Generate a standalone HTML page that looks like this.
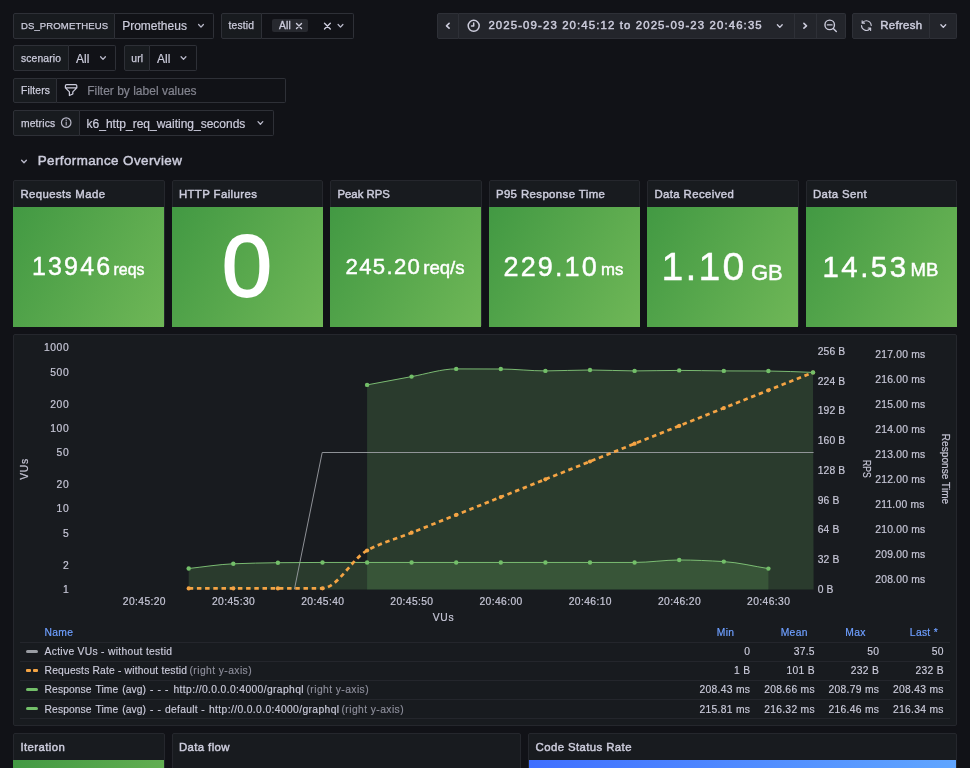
<!DOCTYPE html>
<html lang="en"><head><meta charset="utf-8"><title>k6 Prometheus Dashboard</title>
<style>
html,body{margin:0;padding:0}
body{width:970px;height:768px;overflow:hidden;background:#111217;font-family:"Liberation Sans",sans-serif;color:#ccccdc;position:relative;will-change:transform}
.b{position:absolute;box-sizing:border-box;border:1px solid #2e3037}
.lbl{background:#181b1f;border-radius:2px 0 0 2px}
.val{background:#111217;border-radius:0 2px 2px 0;border-left:none}
.t{position:absolute;white-space:nowrap;line-height:1;transform:translateY(-50%)}
.l{margin-top:.6px;font-size:10.3px;letter-spacing:.15px;-webkit-text-stroke:.25px #ccccdc}
.v{margin-top:.6px;font-size:12px;letter-spacing:0;-webkit-text-stroke:.2px #ccccdc}
.pt{margin-top:.6px;font-size:11.4px;letter-spacing:.4px;-webkit-text-stroke:.45px #ccccdc}
.ax{font-size:10.3px;letter-spacing:.62px;color:#c6c6d6;margin-top:1.2px;-webkit-text-stroke:.2px #c6c6d6}
.lg{font-size:10.3px;letter-spacing:.3px;-webkit-text-stroke:.15px #ccccdc}
.r{text-align:right}
.panel{position:absolute;box-sizing:border-box;border:1px solid #25272d;background:#181b1f;border-radius:2px}
.stat{position:absolute;background:linear-gradient(120deg,rgb(66,153,67),rgb(111,183,87))}
.sv2{position:absolute;white-space:nowrap;line-height:1;color:#fff;-webkit-text-stroke:.45px #fff}
.sv2 span{line-height:1;white-space:nowrap}
.btn{position:absolute;box-sizing:border-box;background:#23252b;border:1px solid #2e3037}
svg{position:absolute;left:0;top:0}
</style></head>
<body>
<div class="b lbl" style="left:13px;top:12.8px;width:102.3px;height:25.8px;"></div>
<div class="t l" style="left:21px;top:25.8px;font-size:9.55px;letter-spacing:.1px">DS_PROMETHEUS</div>
<div class="b val" style="left:115.3px;top:12.8px;width:98.9px;height:25.8px;"></div>
<div class="t v" style="left:122.2px;top:25.8px;">Prometheus</div>
<div class="b lbl" style="left:221.4px;top:12.8px;width:40.8px;height:25.8px;"></div>
<div class="t l" style="left:228.6px;top:25.8px;">testid</div>
<div class="b val" style="left:262.2px;top:12.8px;width:91.8px;height:25.8px;"></div>
<div style="position:absolute;left:272.3px;top:18.5px;width:35.7px;height:13.8px;background:#27292f;border-radius:2px"></div>
<div class="t l" style="left:279px;top:25.6px;-webkit-text-stroke:.3px #ccccdc">All</div>
<div class="b lbl" style="left:13px;top:45.2px;width:56.3px;height:25.6px;"></div>
<div class="t l" style="left:21px;top:58.1px;">scenario</div>
<div class="b val" style="left:69.3px;top:45.2px;width:47.0px;height:25.6px;"></div>
<div class="t v" style="left:76px;top:58.1px;">All</div>
<div class="b lbl" style="left:124px;top:45.2px;width:26.4px;height:25.6px;"></div>
<div class="t l" style="left:131.3px;top:58.1px;">url</div>
<div class="b val" style="left:150.4px;top:45.2px;width:46.7px;height:25.6px;"></div>
<div class="t v" style="left:157px;top:58.1px;">All</div>
<div class="b lbl" style="left:13px;top:77.6px;width:43.6px;height:25.7px;"></div>
<div class="t l" style="left:21px;top:90.55px;">Filters</div>
<div class="b val" style="left:56.6px;top:77.6px;width:229.4px;height:25.7px;"></div>
<div class="t v" style="left:87.2px;top:90.55px;color:#83848f;-webkit-text-stroke:.2px #83848f">Filter by label values</div>
<div class="b lbl" style="left:13px;top:110px;width:66.5px;height:25.7px;"></div>
<div class="t l" style="left:21px;top:122.95px;">metrics</div>
<div class="b val" style="left:79.5px;top:110px;width:194.2px;height:25.7px;"></div>
<div class="t v" style="left:86.6px;top:122.95px;">k6_http_req_waiting_seconds</div>
<div class="btn" style="left:436.8px;top:12.8px;width:22.6px;height:25.8px;border-radius:2px 0 0 2px"></div>
<div class="btn" style="left:459.4px;top:12.8px;width:335.9px;height:25.8px;border-left:none"></div>
<div class="btn" style="left:795.3px;top:12.8px;width:21.9px;height:25.8px;border-left:none"></div>
<div class="btn" style="left:817.2px;top:12.8px;width:28.4px;height:25.8px;border-left:none;border-radius:0 2px 2px 0"></div>
<div class="btn" style="left:852px;top:12.8px;width:78.4px;height:25.8px;border-radius:2px 0 0 2px"></div>
<div class="btn" style="left:930.4px;top:12.8px;width:26.6px;height:25.8px;border-left:none;border-radius:0 2px 2px 0"></div>
<div class="t pt" style="left:488.4px;top:25.8px;letter-spacing:1.12px">2025-09-23 20:45:12 to 2025-09-23 20:46:35</div>
<div class="t pt" style="left:880.3px;top:25.8px;letter-spacing:.3px">Refresh</div>
<div class="t " style="left:37.7px;top:161.4px;font-size:13.4px;letter-spacing:.42px;-webkit-text-stroke:.45px #ccccdc">Performance Overview</div>
<div class="panel" style="left:13px;top:180.4px;width:151.5px;height:146.4px"></div>
<div class="stat" style="left:13.4px;top:206.6px;width:150.7px;height:120px"></div>
<div class="t pt" style="left:20.4px;top:194.8px;">Requests Made</div>
<div class="panel" style="left:171.5px;top:180.4px;width:151.5px;height:146.4px"></div>
<div class="stat" style="left:171.9px;top:206.6px;width:150.7px;height:120px"></div>
<div class="t pt" style="left:178.9px;top:194.8px;">HTTP Failures</div>
<div class="panel" style="left:330px;top:180.4px;width:151.5px;height:146.4px"></div>
<div class="stat" style="left:330.4px;top:206.6px;width:150.7px;height:120px"></div>
<div class="t pt" style="left:337.4px;top:194.8px;letter-spacing:0">Peak RPS</div>
<div class="panel" style="left:488.5px;top:180.4px;width:151.5px;height:146.4px"></div>
<div class="stat" style="left:488.9px;top:206.6px;width:150.7px;height:120px"></div>
<div class="t pt" style="left:495.9px;top:194.8px;">P95 Response Time</div>
<div class="panel" style="left:647px;top:180.4px;width:151.5px;height:146.4px"></div>
<div class="stat" style="left:647.4px;top:206.6px;width:150.7px;height:120px"></div>
<div class="t pt" style="left:654.4px;top:194.8px;">Data Received</div>
<div class="panel" style="left:805.5px;top:180.4px;width:151.5px;height:146.4px"></div>
<div class="stat" style="left:805.9px;top:206.6px;width:150.7px;height:120px"></div>
<div class="t pt" style="left:812.9px;top:194.8px;">Data Sent</div>
<div class="sv2" style="left:31.9px;top:253.84px;font-size:25.0px;letter-spacing:2.2px;">13946<span style="position:absolute;left:81.7px;top:7.7px;font-size:15.9px;letter-spacing:0"> reqs</span></div>
<div class="sv2" style="left:345.6px;top:255.51px;font-size:22.2px;letter-spacing:1.3px;">245.20<span style="position:absolute;left:77.6px;top:3.05px;font-size:18.6px;letter-spacing:0"> req/s</span></div>
<div class="sv2" style="left:503.6px;top:253.74px;font-size:27.0px;letter-spacing:2.1px;">229.10<span style="position:absolute;left:97.4px;top:8.64px;font-size:16.8px;letter-spacing:0"> ms</span></div>
<div class="sv2" style="left:661.5px;top:247.12px;font-size:39.2px;letter-spacing:2.2px;">1.10<span style="position:absolute;left:89.5px;top:14.56px;font-size:22.0px;letter-spacing:0"> GB</span></div>
<div class="sv2" style="left:822.5px;top:252.21px;font-size:29.4px;letter-spacing:2.5px;">14.53<span style="position:absolute;left:88.1px;top:9.15px;font-size:18.6px;letter-spacing:0"> MB</span></div>
<div class="sv2" style="left:221.6px;top:221.51px;font-size:88px;letter-spacing:0px;-webkit-text-stroke:1.9px #fff;transform:scaleX(1.02);transform-origin:0 0">0</div>
<div class="panel" style="left:13px;top:334px;width:944px;height:392.4px"></div>
<div class="t ax" style="right:900.7px;top:343px;margin-top:0;transform:none;">1000</div>
<div class="t ax" style="right:900.7px;top:368px;margin-top:0;transform:none;">500</div>
<div class="t ax" style="right:900.7px;top:400px;margin-top:0;transform:none;">200</div>
<div class="t ax" style="right:900.7px;top:424px;margin-top:0;transform:none;">100</div>
<div class="t ax" style="right:900.7px;top:448px;margin-top:0;transform:none;">50</div>
<div class="t ax" style="right:900.7px;top:480px;margin-top:0;transform:none;">20</div>
<div class="t ax" style="right:900.7px;top:504px;margin-top:0;transform:none;">10</div>
<div class="t ax" style="right:900.7px;top:529px;margin-top:0;transform:none;">5</div>
<div class="t ax" style="right:900.7px;top:561px;margin-top:0;transform:none;">2</div>
<div class="t ax" style="right:900.7px;top:585px;margin-top:0;transform:none;">1</div>
<div class="t ax" style="left:144.4px;top:597px;margin-top:0;transform:translateX(-50%);letter-spacing:.39px">20:45:20</div>
<div class="t ax" style="left:233.6px;top:597px;margin-top:0;transform:translateX(-50%);letter-spacing:.39px">20:45:30</div>
<div class="t ax" style="left:322.8px;top:597px;margin-top:0;transform:translateX(-50%);letter-spacing:.39px">20:45:40</div>
<div class="t ax" style="left:411.9px;top:597px;margin-top:0;transform:translateX(-50%);letter-spacing:.39px">20:45:50</div>
<div class="t ax" style="left:501.1px;top:597px;margin-top:0;transform:translateX(-50%);letter-spacing:.39px">20:46:00</div>
<div class="t ax" style="left:590.3px;top:597px;margin-top:0;transform:translateX(-50%);letter-spacing:.39px">20:46:10</div>
<div class="t ax" style="left:679.5px;top:597px;margin-top:0;transform:translateX(-50%);letter-spacing:.39px">20:46:20</div>
<div class="t ax" style="left:768.7px;top:597px;margin-top:0;transform:translateX(-50%);letter-spacing:.39px">20:46:30</div>
<div class="t ax" style="left:443.5px;top:613px;margin-top:0;transform:translateX(-50%);">VUs</div>
<div class="t ax" style="left:817.8px;top:347px;margin-top:0;transform:none;letter-spacing:.1px">256 B</div>
<div class="t ax" style="left:817.8px;top:377px;margin-top:0;transform:none;letter-spacing:.1px">224 B</div>
<div class="t ax" style="left:817.8px;top:406px;margin-top:0;transform:none;letter-spacing:.1px">192 B</div>
<div class="t ax" style="left:817.8px;top:436px;margin-top:0;transform:none;letter-spacing:.1px">160 B</div>
<div class="t ax" style="left:817.8px;top:466px;margin-top:0;transform:none;letter-spacing:.1px">128 B</div>
<div class="t ax" style="left:817.8px;top:496px;margin-top:0;transform:none;letter-spacing:.1px">96 B</div>
<div class="t ax" style="left:817.8px;top:525px;margin-top:0;transform:none;letter-spacing:.1px">64 B</div>
<div class="t ax" style="left:817.8px;top:555px;margin-top:0;transform:none;letter-spacing:.1px">32 B</div>
<div class="t ax" style="left:817.8px;top:585px;margin-top:0;transform:none;letter-spacing:.1px">0 B</div>
<div class="t ax" style="left:875.2px;top:350px;margin-top:0;transform:none;letter-spacing:.25px">217.00 ms</div>
<div class="t ax" style="left:875.2px;top:375px;margin-top:0;transform:none;letter-spacing:.25px">216.00 ms</div>
<div class="t ax" style="left:875.2px;top:400px;margin-top:0;transform:none;letter-spacing:.25px">215.00 ms</div>
<div class="t ax" style="left:875.2px;top:425px;margin-top:0;transform:none;letter-spacing:.25px">214.00 ms</div>
<div class="t ax" style="left:875.2px;top:450px;margin-top:0;transform:none;letter-spacing:.25px">213.00 ms</div>
<div class="t ax" style="left:875.2px;top:475px;margin-top:0;transform:none;letter-spacing:.25px">212.00 ms</div>
<div class="t ax" style="left:875.2px;top:500px;margin-top:0;transform:none;letter-spacing:.25px">211.00 ms</div>
<div class="t ax" style="left:875.2px;top:525px;margin-top:0;transform:none;letter-spacing:.25px">210.00 ms</div>
<div class="t ax" style="left:875.2px;top:550px;margin-top:0;transform:none;letter-spacing:.25px">209.00 ms</div>
<div class="t ax" style="left:875.2px;top:575px;margin-top:0;transform:none;letter-spacing:.25px">208.00 ms</div>
<div class="t ax" style="left:24.7px;top:468px;transform:translate(-50%,-50%) rotate(-90deg)">VUs</div>
<div class="t ax" style="left:866px;top:468px;transform:translate(-50%,-50%) rotate(90deg) scaleX(.84);letter-spacing:0">RPS</div>
<div class="t ax" style="left:945.3px;top:467.4px;transform:translate(-50%,-50%) rotate(90deg);letter-spacing:.08px;font-size:10px">Response Time</div>
<div class="t lg" style="left:44.6px;top:628px;margin-top:0;transform:none;color:#6e9fff;-webkit-text-stroke:.2px #6e9fff">Name</div>
<div class="t lg" style="right:235.7px;top:628px;margin-top:0;transform:none;color:#6e9fff;-webkit-text-stroke:.2px #6e9fff">Min</div>
<div class="t lg" style="right:162.3px;top:628px;margin-top:0;transform:none;color:#6e9fff;-webkit-text-stroke:.2px #6e9fff">Mean</div>
<div class="t lg" style="right:104.4px;top:628px;margin-top:0;transform:none;color:#6e9fff;-webkit-text-stroke:.2px #6e9fff">Max</div>
<div class="t lg" style="right:32px;top:628px;margin-top:0;transform:none;color:#6e9fff;-webkit-text-stroke:.2px #6e9fff">Last *</div>
<div style="position:absolute;left:20px;top:641.8px;width:930px;height:1px;background:#24262c"></div>
<div style="position:absolute;left:26px;top:649.6px;width:12px;height:3.2px;border-radius:1.6px;background:#9a9da3"></div>
<div class="t lg" style="left:44.6px;top:647px;margin-top:0;transform:none;"><span style="display:inline-block;">Active VUs - without testid</span></div>
<div class="t lg" style="right:219.7px;top:647px;margin-top:0;transform:none;">0</div>
<div class="t lg" style="right:155.1px;top:647px;margin-top:0;transform:none;">37.5</div>
<div class="t lg" style="right:90.8px;top:647px;margin-top:0;transform:none;">50</div>
<div class="t lg" style="right:26.2px;top:647px;margin-top:0;transform:none;">50</div>
<div style="position:absolute;left:20px;top:660.9px;width:930px;height:1px;background:#24262c"></div>
<div style="position:absolute;left:26px;top:668.8px;width:5.2px;height:3.2px;border-radius:1px;background:#f4a444"></div>
<div style="position:absolute;left:32.8px;top:668.8px;width:5.2px;height:3.2px;border-radius:1px;background:#f4a444"></div>
<div class="t lg" style="left:44.6px;top:666px;margin-top:0;transform:none;"><span style="display:inline-block;width:144.9px;"><span style="letter-spacing:.17px">Requests Rate - without testid</span> </span><span style="display:inline-block;color:#8e8f9c;letter-spacing:.42px;-webkit-text-stroke:.15px #8e8f9c;">(right y-axis)</span></div>
<div class="t lg" style="right:219.7px;top:666px;margin-top:0;transform:none;">1 B</div>
<div class="t lg" style="right:155.1px;top:666px;margin-top:0;transform:none;">101 B</div>
<div class="t lg" style="right:90.8px;top:666px;margin-top:0;transform:none;">232 B</div>
<div class="t lg" style="right:26.2px;top:666px;margin-top:0;transform:none;">232 B</div>
<div style="position:absolute;left:20px;top:680.0px;width:930px;height:1px;background:#24262c"></div>
<div style="position:absolute;left:26px;top:687.7px;width:12px;height:3.2px;border-radius:1.6px;background:#73bf69"></div>
<div class="t lg" style="left:44.6px;top:685px;margin-top:0;transform:none;"><span style="display:inline-block;width:128.9px;"><span style="letter-spacing:.08px;word-spacing:1.05px">Response Time (avg) - - -</span> </span><span style="display:inline-block;width:133.0px;"><span style="letter-spacing:.38px">http://0.0.0.0:4000/graphql</span> </span><span style="display:inline-block;color:#8e8f9c;letter-spacing:.42px;-webkit-text-stroke:.15px #8e8f9c;">(right y-axis)</span></div>
<div class="t lg" style="right:219.7px;top:685px;margin-top:0;transform:none;">208.43 ms</div>
<div class="t lg" style="right:155.1px;top:685px;margin-top:0;transform:none;">208.66 ms</div>
<div class="t lg" style="right:90.8px;top:685px;margin-top:0;transform:none;">208.79 ms</div>
<div class="t lg" style="right:26.2px;top:685px;margin-top:0;transform:none;">208.43 ms</div>
<div style="position:absolute;left:20px;top:699.1px;width:930px;height:1px;background:#24262c"></div>
<div style="position:absolute;left:26px;top:707.2px;width:12px;height:3.2px;border-radius:1.6px;background:#73bf69"></div>
<div class="t lg" style="left:44.6px;top:705px;margin-top:0;transform:none;"><span style="display:inline-block;width:120.4px;"><span style="letter-spacing:.08px;word-spacing:1.05px">Response Time (avg) - -</span> </span><span style="display:inline-block;width:44px;">default - </span><span style="display:inline-block;width:132.5px;"><span style="letter-spacing:.38px">http://0.0.0.0:4000/graphql</span> </span><span style="display:inline-block;color:#8e8f9c;letter-spacing:.42px;-webkit-text-stroke:.15px #8e8f9c;">(right y-axis)</span></div>
<div class="t lg" style="right:219.7px;top:705px;margin-top:0;transform:none;">215.81 ms</div>
<div class="t lg" style="right:155.1px;top:705px;margin-top:0;transform:none;">216.32 ms</div>
<div class="t lg" style="right:90.8px;top:705px;margin-top:0;transform:none;">216.46 ms</div>
<div class="t lg" style="right:26.2px;top:705px;margin-top:0;transform:none;">216.34 ms</div>
<div style="position:absolute;left:20px;top:718.3px;width:930px;height:1px;background:#24262c"></div>
<div class="panel" style="left:13px;top:733.2px;width:151.5px;height:60px"></div>
<div class="stat" style="left:13.4px;top:759.8px;width:150.7px;height:120px"></div>
<div class="t pt" style="left:20.4px;top:747.2px;">Iteration</div>
<div class="panel" style="left:171.5px;top:733.2px;width:349.5px;height:60px"></div>
<div class="t pt" style="left:178.9px;top:747.2px;">Data flow</div>
<div class="panel" style="left:528.2px;top:733.2px;width:428.6px;height:60px"></div>
<div style="position:absolute;left:528.7px;top:759.9px;width:427.8px;height:120px;background:linear-gradient(120deg,rgb(63,111,255),rgb(101,174,255))"></div>
<div class="t pt" style="left:535.6px;top:747.2px;">Code Status Rate</div>
<svg width="970" height="768" viewBox="0 0 970 768"><path d="M198.60 24.50 L201.00 27.10 L203.40 24.50" fill="none" stroke="#b9b9ca" stroke-width="1.3" stroke-linecap="round" stroke-linejoin="round" transform="rotate(0 201 25.8)"/>
<path d="M296.5 23.4 L301.5 28.4 M301.5 23.4 L296.5 28.4" stroke="#ccccdc" stroke-width="1.4" stroke-linecap="round" fill="none"/>
<path d="M324.5 23.2 L330.3 29 M330.3 23.2 L324.5 29" stroke="#ccccdc" stroke-width="1.4" stroke-linecap="round" fill="none"/>
<path d="M338.10 24.50 L340.50 27.10 L342.90 24.50" fill="none" stroke="#b9b9ca" stroke-width="1.3" stroke-linecap="round" stroke-linejoin="round" transform="rotate(0 340.5 25.8)"/>
<path d="M100.60 56.80 L103.00 59.40 L105.40 56.80" fill="none" stroke="#b9b9ca" stroke-width="1.3" stroke-linecap="round" stroke-linejoin="round" transform="rotate(0 103 58.1)"/>
<path d="M181.10 56.80 L183.50 59.40 L185.90 56.80" fill="none" stroke="#b9b9ca" stroke-width="1.3" stroke-linecap="round" stroke-linejoin="round" transform="rotate(0 183.5 58.1)"/>
<path d="M65.4 87.9 V85.8 Q65.4 84.5 66.7 84.5 H75.5 Q76.8 84.5 76.8 85.8 V87.9 L72.8 91.9 V94.0 L69.4 95.5 V91.9 Z M65.9 87.9 H76.3" fill="none" stroke="#ccccdc" stroke-width="1.25" stroke-linejoin="round"/>
<circle cx="66.2" cy="122.65" r="4.75" fill="none" stroke="#b8b8c8" stroke-width="1.2"/><path d="M66.2 122.05 V125.05" stroke="#b4b4c4" stroke-width="1.1" stroke-linecap="round"/><circle cx="66.2" cy="120.25" r=".65" fill="#b4b4c4"/>
<path d="M258.00 121.65 L260.40 124.25 L262.80 121.65" fill="none" stroke="#b9b9ca" stroke-width="1.3" stroke-linecap="round" stroke-linejoin="round" transform="rotate(0 260.4 122.95)"/>
<path d="M445.40 24.50 L447.80 27.10 L450.20 24.50" fill="none" stroke="#ccccdc" stroke-width="1.6" stroke-linecap="round" stroke-linejoin="round" transform="rotate(90 447.8 25.8)"/>
<path d="M802.80 24.50 L805.20 27.10 L807.60 24.50" fill="none" stroke="#ccccdc" stroke-width="1.6" stroke-linecap="round" stroke-linejoin="round" transform="rotate(-90 805.2 25.8)"/>
<path d="M777.40 24.80 L779.80 27.40 L782.20 24.80" fill="none" stroke="#ccccdc" stroke-width="1.35" stroke-linecap="round" stroke-linejoin="round" transform="rotate(0 779.8 26.1)"/>
<path d="M940.90 24.80 L943.30 27.40 L945.70 24.80" fill="none" stroke="#ccccdc" stroke-width="1.35" stroke-linecap="round" stroke-linejoin="round" transform="rotate(0 943.3 26.1)"/>
<circle cx="473.7" cy="25.8" r="5.5" fill="none" stroke="#ccccdc" stroke-width="1.5"/><path d="M473.7 23.0 V26.0 H471.5" fill="none" stroke="#ccccdc" stroke-width="1.5" stroke-linecap="round" stroke-linejoin="round"/>
<circle cx="829.7" cy="24.9" r="4.75" fill="none" stroke="#ccccdc" stroke-width="1.4"/><path d="M827.4 24.9 H832.0 M833.3 28.5 L836.3 31.5" stroke="#ccccdc" stroke-width="1.4" stroke-linecap="round" fill="none"/>
<path transform="translate(859.9 19.1) scale(.54)" fill="#ccccdc" d="M19.91,15.51H15.38a1,1,0,0,0,0,2h2.4A8,8,0,0,1,4,12a1,1,0,0,0-2,0,10,10,0,0,0,16.88,7.23V21a1,1,0,0,0,2,0V16.5A1,1,0,0,0,19.91,15.51ZM12,2A10,10,0,0,0,5.12,4.77V3a1,1,0,0,0-2,0V7.5a1,1,0,0,0,1,1h4.5a1,1,0,0,0,0-2H6.22A8,8,0,0,1,20,12a1,1,0,0,0,2,0A10,10,0,0,0,12,2Z"/>
<path d="M21.60 160.20 L24.00 162.80 L26.40 160.20" fill="none" stroke="#b9b9ca" stroke-width="1.3" stroke-linecap="round" stroke-linejoin="round" transform="rotate(0 24 161.5)"/>
<path d="M188.7 568.50 C203.6 566.93 218.4 564.39 233.3 563.80 C248.2 563.21 263.0 562.84 277.9 562.70 C292.7 562.56 307.6 562.45 322.5 562.45 C337.3 562.45 352.2 562.45 367.1 562.45 C381.9 562.45 396.8 562.45 411.6 562.45 C426.5 562.45 441.4 562.45 456.2 562.45 C471.1 562.45 486.0 562.45 500.8 562.45 C515.7 562.45 530.6 562.45 545.4 562.45 C560.3 562.45 575.1 562.45 590.0 562.45 C604.9 562.45 619.7 562.45 634.6 562.45 C649.5 562.45 664.3 560.00 679.2 560.00 C694.1 560.00 708.9 560.73 723.8 561.60 C738.6 562.47 753.5 566.27 768.4 568.60 L768.4 589.4 L188.7 589.4 Z" fill="#73bf69" fill-opacity=".2"/>
<path d="M367.1 384.90 C381.9 382.13 396.8 379.26 411.6 376.60 C426.5 373.94 441.4 368.90 456.2 368.90 C471.1 368.90 486.0 368.94 500.8 369.00 C515.7 369.06 530.6 370.90 545.4 370.90 C560.3 370.90 575.1 370.00 590.0 370.00 C604.9 370.00 619.7 370.90 634.6 370.90 C649.5 370.90 664.3 370.40 679.2 370.40 C694.1 370.40 708.9 370.84 723.8 370.90 C738.6 370.96 753.5 370.94 768.4 371.00 C783.2 371.06 798.1 371.93 813.0 372.40 L813.6 589.4 L367.1 589.4 Z" fill="#73bf69" fill-opacity=".2"/>
<polyline points="294.4,589.4 322.2,452.5 813.6,452.5" fill="none" stroke="#a4a7ac" stroke-width="0.85"/>
<path d="M188.7 568.50 C203.6 566.93 218.4 564.39 233.3 563.80 C248.2 563.21 263.0 562.84 277.9 562.70 C292.7 562.56 307.6 562.45 322.5 562.45 C337.3 562.45 352.2 562.45 367.1 562.45 C381.9 562.45 396.8 562.45 411.6 562.45 C426.5 562.45 441.4 562.45 456.2 562.45 C471.1 562.45 486.0 562.45 500.8 562.45 C515.7 562.45 530.6 562.45 545.4 562.45 C560.3 562.45 575.1 562.45 590.0 562.45 C604.9 562.45 619.7 562.45 634.6 562.45 C649.5 562.45 664.3 560.00 679.2 560.00 C694.1 560.00 708.9 560.73 723.8 561.60 C738.6 562.47 753.5 566.27 768.4 568.60" fill="none" stroke="#84cb7a" stroke-width=".9"/>
<path d="M367.1 384.90 C381.9 382.13 396.8 379.26 411.6 376.60 C426.5 373.94 441.4 368.90 456.2 368.90 C471.1 368.90 486.0 368.94 500.8 369.00 C515.7 369.06 530.6 370.90 545.4 370.90 C560.3 370.90 575.1 370.00 590.0 370.00 C604.9 370.00 619.7 370.90 634.6 370.90 C649.5 370.90 664.3 370.40 679.2 370.40 C694.1 370.40 708.9 370.84 723.8 370.90 C738.6 370.96 753.5 370.94 768.4 371.00 C783.2 371.06 798.1 371.93 813.0 372.40" fill="none" stroke="#84cb7a" stroke-width=".9"/>
<path d="M188.7 588.40 C203.6 588.40 218.4 588.40 233.3 588.40 C248.2 588.40 263.0 588.40 277.9 588.40 C292.7 588.40 307.6 588.37 322.5 588.30 C337.3 588.23 352.2 558.57 367.1 550.50 C381.9 542.43 396.8 538.63 411.6 532.70 C426.5 526.76 441.4 520.83 456.2 514.89 C471.1 508.96 486.0 503.02 500.8 497.09 C515.7 491.15 530.6 485.22 545.4 479.28 C560.3 473.35 575.1 467.41 590.0 461.48 C604.9 455.54 619.7 449.61 634.6 443.67 C649.5 437.74 664.3 431.80 679.2 425.87 C694.1 419.93 708.9 414.00 723.8 408.06 C738.6 402.13 753.5 396.19 768.4 390.26 C783.2 384.32 798.1 378.39 813.0 372.45" fill="none" stroke="#f4a444" stroke-width="2.75" stroke-dasharray="4.5 3.7"/>
<circle cx="188.7" cy="588.4" r="2.1" fill="#f4a444"/>
<circle cx="233.3" cy="588.4" r="2.1" fill="#f4a444"/>
<circle cx="277.9" cy="588.4" r="2.1" fill="#f4a444"/>
<circle cx="322.5" cy="588.3" r="2.1" fill="#f4a444"/>
<circle cx="367.1" cy="550.5" r="2.1" fill="#f4a444"/>
<circle cx="411.6" cy="532.7" r="2.1" fill="#f4a444"/>
<circle cx="456.2" cy="514.9" r="2.1" fill="#f4a444"/>
<circle cx="500.8" cy="497.1" r="2.1" fill="#f4a444"/>
<circle cx="545.4" cy="479.3" r="2.1" fill="#f4a444"/>
<circle cx="590.0" cy="461.5" r="2.1" fill="#f4a444"/>
<circle cx="634.6" cy="443.7" r="2.1" fill="#f4a444"/>
<circle cx="679.2" cy="425.9" r="2.1" fill="#f4a444"/>
<circle cx="723.8" cy="408.1" r="2.1" fill="#f4a444"/>
<circle cx="768.4" cy="390.3" r="2.1" fill="#f4a444"/>
<circle cx="813.0" cy="372.5" r="2.1" fill="#f4a444"/>
<circle cx="188.7" cy="568.5" r="2.2" fill="#73bf69"/>
<circle cx="233.3" cy="563.8" r="2.2" fill="#73bf69"/>
<circle cx="277.9" cy="562.7" r="2.2" fill="#73bf69"/>
<circle cx="322.5" cy="562.45" r="2.2" fill="#73bf69"/>
<circle cx="367.1" cy="562.45" r="2.2" fill="#73bf69"/>
<circle cx="411.6" cy="562.45" r="2.2" fill="#73bf69"/>
<circle cx="456.2" cy="562.45" r="2.2" fill="#73bf69"/>
<circle cx="500.8" cy="562.45" r="2.2" fill="#73bf69"/>
<circle cx="545.4" cy="562.45" r="2.2" fill="#73bf69"/>
<circle cx="590.0" cy="562.45" r="2.2" fill="#73bf69"/>
<circle cx="634.6" cy="562.45" r="2.2" fill="#73bf69"/>
<circle cx="679.2" cy="560.0" r="2.2" fill="#73bf69"/>
<circle cx="723.8" cy="561.6" r="2.2" fill="#73bf69"/>
<circle cx="768.4" cy="568.6" r="2.2" fill="#73bf69"/>
<circle cx="367.1" cy="384.9" r="2.2" fill="#73bf69"/>
<circle cx="411.6" cy="376.6" r="2.2" fill="#73bf69"/>
<circle cx="456.2" cy="368.9" r="2.2" fill="#73bf69"/>
<circle cx="500.8" cy="369.0" r="2.2" fill="#73bf69"/>
<circle cx="545.4" cy="370.9" r="2.2" fill="#73bf69"/>
<circle cx="590.0" cy="370.0" r="2.2" fill="#73bf69"/>
<circle cx="634.6" cy="370.9" r="2.2" fill="#73bf69"/>
<circle cx="679.2" cy="370.4" r="2.2" fill="#73bf69"/>
<circle cx="723.8" cy="370.9" r="2.2" fill="#73bf69"/>
<circle cx="768.4" cy="371.0" r="2.2" fill="#73bf69"/>
<circle cx="813.0" cy="372.4" r="2.2" fill="#73bf69"/></svg>
</body></html>
